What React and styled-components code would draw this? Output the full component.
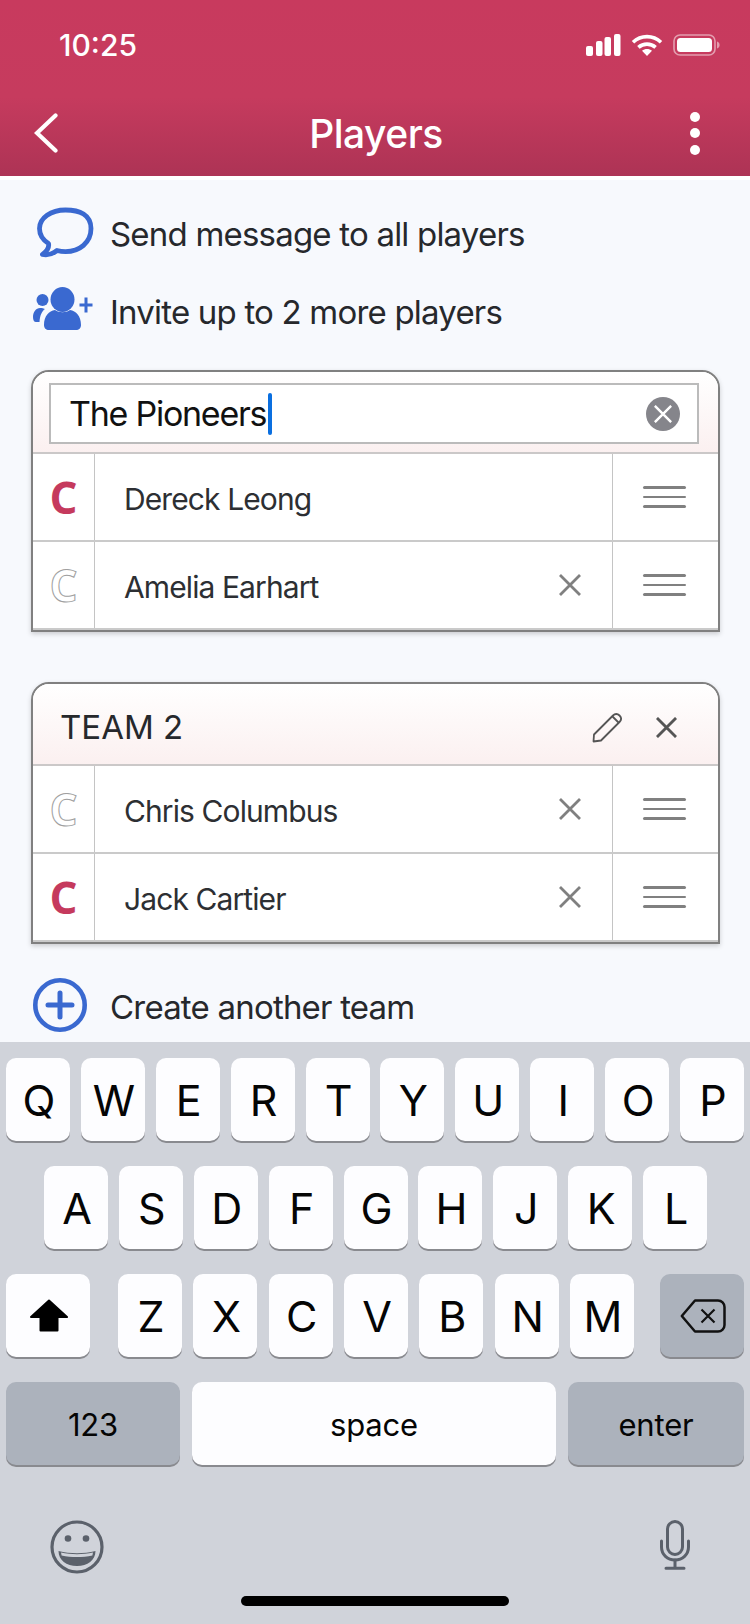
import React from 'react'
import styled, { createGlobalStyle } from 'styled-components'

const GlobalStyle = createGlobalStyle`
  html, body { margin: 0; padding: 0; }
  body { font-family: Inter, "Liberation Sans", sans-serif; background: #f7f9fd; }
`

const Screen = styled.div`
  width: 750px;
  height: 1624px;
  display: flex;
  flex-direction: column;
  overflow: hidden;
  background: #f7f9fd;
`

const Header = styled.header`
  box-sizing: border-box;
  height: 180px;
  flex: none;
  border-bottom: 4px solid #fff;
  background: linear-gradient(180deg, #c83a5e 0%, #c63b5e 55%, #ad3355 100%);
  color: #fff;
`

const StatusBar = styled.div`
  height: 90px;
  display: flex;
  align-items: center;
  justify-content: space-between;
  padding: 0 30px 0 59px;
`

const Clock = styled.span`
  font-size: 30px;
  font-weight: 500;
`

const StatusIcons = styled.div`
  display: flex;
  align-items: center;
  gap: 10px;
`

const NavBar = styled.nav`
  height: 86px;
  display: grid;
  grid-template-columns: 1fr auto 1fr;
  align-items: center;
  padding: 0 32px 0 34px;
`

const Title = styled.h1`
  margin: 0;
  font-size: 39px;
  font-weight: 500;
  letter-spacing: -0.5px;
`

const MoreDots = styled.div`
  justify-self: end;
  margin-right: 18px;
  display: flex;
  flex-direction: column;
  gap: 6.5px;

  span {
    width: 10px;
    height: 10px;
    border-radius: 50%;
    background: #fff;
  }
`

const Body = styled.main`
  flex: 1;
  min-height: 0;
  padding-top: 15px;
`

const ActionRow = styled.div`
  box-sizing: border-box;
  height: ${(p) => p.$height || 78}px;
  margin-top: ${(p) => p.$top || 0}px;
  display: flex;
  align-items: center;
  padding-left: 33px;
  font-size: 33px;
  letter-spacing: -0.8px;
  color: #26282c;
`

const IconSlot = styled.div`
  width: 77px;
  flex: none;
  display: flex;
  align-items: center;
`

const ActionLabel = styled.span`
  padding-top: ${(p) => p.$shift || 0}px;
`

const Card = styled.section`
  margin: ${(p) => p.$top}px 30px 0 31px;
  border: 2px solid #808080;
  border-radius: 18px 18px 0 0;
  background: #fff;
  box-shadow: 0 2px 5px rgba(0, 0, 0, 0.18);
  overflow: hidden;
`

const CardHeader = styled.div`
  box-sizing: border-box;
  height: 82px;
  display: flex;
  align-items: center;
  border-bottom: 2px solid #cbc8c8;
  background: linear-gradient(180deg, #ffffff 0%, #fbf0f0 100%);
  padding: ${(p) => (p.$editing ? '0 19px 0 16px' : '6px 41px 0 27px')};
`

const TeamField = styled.div`
  flex: 1;
  box-sizing: border-box;
  height: 61px;
  margin-top: 3px;
  display: flex;
  align-items: center;
  border: 2px solid #bbb;
  background: #fff;
  padding: 0 17px 0 18px;
  font-size: 34px;
  letter-spacing: -1.25px;
  color: #111;
`

const Caret = styled.span`
  width: 4px;
  height: 42px;
  margin-left: 2px;
  border-radius: 2px;
  background: #0a6fe0;
`

const ClearButton = styled.div`
  margin-left: auto;
  width: 34px;
  height: 34px;
  border-radius: 50%;
  background: #85858b;
  display: flex;
  align-items: center;
  justify-content: center;
`

const TeamName = styled.span`
  font-size: 33px;
  color: #26282c;
`

const HeaderActions = styled.div`
  margin-left: auto;
  display: flex;
  align-items: center;
  gap: 33px;
`

const PlayerRow = styled.div`
  box-sizing: border-box;
  height: 88px;
  display: grid;
  grid-template-columns: 62px 1fr 106px;
  border-bottom: 2px solid #cacaca;
`

const CaptainCell = styled.div`
  display: flex;
  align-items: center;
  justify-content: center;
  padding-bottom: 1px;
  border-right: 1px solid #c4c4c4;
`

const CaptainMark = styled.span`
  font-family: "Open Sans", sans-serif;
  font-size: 44px;
  font-weight: 700;
  line-height: 1;
  color: ${(p) => (p.$active ? '#c53a5d' : 'transparent')};
  -webkit-text-stroke: ${(p) => (p.$active ? '0' : '1px #a0a0a0')};
`

const NameCell = styled.div`
  display: flex;
  align-items: center;
  justify-content: space-between;
  padding: 4px 31px 0 29px;
  font-size: 30px;
  letter-spacing: -0.9px;
  color: #2d2f33;

  svg {
    margin-top: -4px;
  }
`

const HandleCell = styled.div`
  display: flex;
  flex-direction: column;
  align-items: center;
  justify-content: center;
  gap: 7px;
  border-left: 1px solid #c4c4c4;
  padding-right: 2px;

  span {
    width: 43px;
    height: 2.6px;
    border-radius: 2px;
    background: #808080;
  }
`

const Keyboard = styled.div`
  box-sizing: border-box;
  height: 582px;
  flex: none;
  background: #d0d3da;
  padding-top: 16px;
  display: flex;
  flex-direction: column;
  gap: 25px;
`

const KeyRow = styled.div`
  display: flex;
  justify-content: ${(p) => p.$justify || 'flex-start'};
  gap: ${(p) => p.$gap || 10.9}px;
  padding: 0 6px 0 ${(p) => p.$left || 6}px;
`

const LetterGroup = styled.div`
  display: flex;
  gap: 11.33px;
  margin-left: 2px;
`

const Key = styled.div`
  box-sizing: border-box;
  width: ${(p) => p.$width || 64}px;
  height: 83px;
  flex: none;
  display: flex;
  align-items: center;
  justify-content: center;
  padding-left: ${(p) => (p.$small ? 0 : 2)}px;
  padding-top: ${(p) => (p.$small ? 2 : 0)}px;
  border-radius: 10px;
  background: ${(p) => (p.$special ? '#acb2bc' : '#fdfdff')};
  box-shadow: 0 2px 0 #898a8f;
  font-size: ${(p) => (p.$small ? 31 : 43)}px;
  letter-spacing: ${(p) => (p.$small ? '-0.2px' : '0')};
  color: #050505;
`

const KeyboardFooter = styled.div`
  display: flex;
  align-items: flex-start;
  justify-content: space-between;
  padding: 30px 60px 0 50px;
  height: 54px;
`

const HomeBar = styled.div`
  width: 268px;
  height: 10px;
  margin: -3px auto 0;
  border-radius: 5px;
  background: #000;
`

const SignalIcon = () => (
  <svg width="35" height="22" viewBox="0 0 35 22" fill="#fff">
    <rect x="0" y="12" width="7" height="10" rx="2" />
    <rect x="10" y="7" width="6.5" height="15" rx="2" />
    <rect x="18.5" y="3" width="6.5" height="19" rx="2" />
    <rect x="28" y="0" width="6.5" height="22" rx="2" />
  </svg>
)

const WifiIcon = () => (
  <svg width="32" height="23" viewBox="0 0 32 23" fill="none" stroke="#fff" strokeWidth="3.6">
    <path d="M2 8.2C10 .8 22 .8 30 8.2" />
    <path d="M7.4 13.4c4.9-4.4 12.3-4.4 17.2 0" />
    <path d="M16 22l-5-5.2c2.9-2.4 7.1-2.4 10 0z" fill="#fff" stroke="none" />
  </svg>
)

const BatteryIcon = () => (
  <svg width="47" height="22" viewBox="0 0 47 22">
    <rect x="1" y="1" width="41" height="20" rx="6" fill="none" stroke="#fff" strokeOpacity="0.5" strokeWidth="1.6" />
    <rect x="4" y="4" width="35" height="14" rx="3.5" fill="#fff" />
    <path d="M44 7.5c1.6.5 2.6 1.8 2.6 3.5s-1 3-2.6 3.5z" fill="#fff" fillOpacity="0.5" />
  </svg>
)

const BackIcon = () => (
  <svg width="24" height="40" viewBox="0 0 24 40" fill="none" stroke="#fff" strokeWidth="4.2" strokeLinecap="round">
    <path d="M21.5 2.5L3 20l18.5 17.5" />
  </svg>
)

const BubbleIcon = () => (
  <svg width="62" height="54" viewBox="0 0 62 54" fill="none" stroke="#3a69d0" strokeWidth="4.8" strokeLinejoin="round">
    <path d="M32.500 3C18 3 6.500 11 6.500 21.500c0 6 3.500 11.500 9 15 .8 3.500-2 8-6 11 4 1 10-.5 14.500-4 2.700.7 5.500 1.100 8.500 1.100 14 0 25.500-9 25.500-23S46.500 3 32.500 3z" />
  </svg>
)

const UsersPlusIcon = () => (
  <svg width="62" height="54" viewBox="0 0 62 54" fill="#3a69d0">
    <ellipse cx="29.5" cy="14.5" rx="12" ry="12.5" />
    <path d="M11 40c0-9 5-14 11-15 4 3 11 3 15 0 6 1 11 6 11 15 0 3-2 5-5 5H16c-3 0-5-2-5-5z" />
    <ellipse cx="9.5" cy="15" rx="6" ry="6" />
    <path d="M0 32c0-5 3-9 7-9 2 0 4 .5 5 1-3 2-5 6-5.500 13H3c-2 0-3-2-3-5z" />
    <path d="M46.500 20h13M53 12.500v15" stroke="#3a69d0" strokeWidth="3" fill="none" />
  </svg>
)

const PlusCircleIcon = () => (
  <svg width="54" height="54" viewBox="0 0 54 54" fill="none" stroke="#3a69d0">
    <circle cx="27" cy="27" r="24.700" strokeWidth="4.600" />
    <path d="M15 27h24M27 15v24" strokeWidth="5" strokeLinecap="round" />
  </svg>
)

const CrossIcon = ({ size = 22, color = '#808080', weight = 2.8 }) => (
  <svg width={size} height={size} viewBox="0 0 22 22" fill="none" stroke={color} strokeWidth={weight}>
    <path d="M1 1l20 20M21 1L1 21" />
  </svg>
)

const PencilIcon = () => (
  <svg width="31" height="31" viewBox="0 0 31 31" fill="none" stroke="#555" strokeWidth="1.8" strokeLinejoin="round">
    <path d="M1.500 29.500L2 22.500 21 3.500c2-2 4.500-2 6.500 0s2 4.500 0 6.500L9 28.500z" />
    <path d="M20.500 4.500l6.500 6.500" />
  </svg>
)

const ShiftIcon = () => (
  <svg width="38" height="33" viewBox="0 0 38 33" fill="#000" stroke="#000" strokeWidth="2" strokeLinejoin="round">
    <path d="M19 1.500L37 18H27.500v13.500h-17V18H1z" />
  </svg>
)

const BackspaceIcon = () => (
  <svg width="46" height="34" viewBox="0 0 46 34" fill="none" stroke="#111" strokeWidth="2.500" strokeLinejoin="round">
    <path d="M15 1.500h23a6.500 6.500 0 0 1 6.500 6.500v18a6.500 6.500 0 0 1-6.500 6.500H15L1.800 17z" />
    <path d="M21.500 10.500l13 13M34.500 10.500l-13 13" strokeWidth="2.200" />
  </svg>
)

const EmojiIcon = () => (
  <svg width="54" height="54" viewBox="0 0 54 54" fill="none">
    <circle cx="27" cy="27" r="25" stroke="#5b616b" strokeWidth="3.200" />
    <circle cx="18" cy="18.500" r="3.300" fill="#5b616b" />
    <circle cx="36" cy="18.500" r="3.300" fill="#5b616b" />
    <path d="M8.500 31c12 3 25 3 37 0 0 9-8 15-18.500 15S8.500 40 8.500 31z" fill="#5b616b" />
    <path d="M11 32.500c10 2.300 22 2.300 32 0l-.6 3c-10 2-21 2-30.800 0z" fill="#d0d3da" />
  </svg>
)

const MicIcon = () => (
  <svg width="30" height="50" viewBox="0 0 30 50" fill="none" stroke="#5b616b" strokeWidth="3" strokeLinecap="round">
    <rect x="7.500" y="1.500" width="15" height="33" rx="7.500" />
    <path d="M1.500 21v6c0 7.500 6 13 13.500 13s13.500-5.500 13.500-13v-6" />
    <path d="M15 40v8M6 48.300h18" />
  </svg>
)

const ROW_ONE = ['Q', 'W', 'E', 'R', 'T', 'Y', 'U', 'I', 'O', 'P']
const ROW_TWO = ['A', 'S', 'D', 'F', 'G', 'H', 'J', 'K', 'L']
const ROW_THREE = ['Z', 'X', 'C', 'V', 'B', 'N', 'M']

const Player = ({ name, captain, removable = true }) => (
  <PlayerRow>
    <CaptainCell>
      <CaptainMark $active={captain}>C</CaptainMark>
    </CaptainCell>
    <NameCell>
      {name}
      {removable && <CrossIcon />}
    </NameCell>
    <HandleCell>
      <span />
      <span />
      <span />
    </HandleCell>
  </PlayerRow>
)

export default function App() {
  return (
    <Screen>
      <GlobalStyle />
      <Header>
        <StatusBar>
          <Clock>10:25</Clock>
          <StatusIcons>
            <SignalIcon />
            <WifiIcon />
            <BatteryIcon />
          </StatusIcons>
        </StatusBar>
        <NavBar>
          <BackIcon />
          <Title>Players</Title>
          <MoreDots>
            <span />
            <span />
            <span />
          </MoreDots>
        </NavBar>
      </Header>

      <Body>
        <ActionRow>
          <IconSlot><BubbleIcon /></IconSlot>
          <ActionLabel>Send message to all players</ActionLabel>
        </ActionRow>
        <ActionRow>
          <IconSlot><UsersPlusIcon /></IconSlot>
          <ActionLabel>Invite up to 2 more players</ActionLabel>
        </ActionRow>

        <Card $top={19}>
          <CardHeader $editing>
            <TeamField>
              The Pioneers
              <Caret />
              <ClearButton>
                <CrossIcon size={18} color="#fff" weight={3} />
              </ClearButton>
            </TeamField>
          </CardHeader>
          <Player name="Dereck Leong" captain removable={false} />
          <Player name="Amelia Earhart" />
        </Card>

        <Card $top={50}>
          <CardHeader>
            <TeamName>TEAM 2</TeamName>
            <HeaderActions>
              <PencilIcon />
              <CrossIcon size={21} color="#555" weight={3} />
            </HeaderActions>
          </CardHeader>
          <Player name="Chris Columbus" />
          <Player name="Jack Cartier" captain />
        </Card>

        <ActionRow $top={24} $height={74}>
          <IconSlot><PlusCircleIcon /></IconSlot>
          <ActionLabel $shift={4}>Create another team</ActionLabel>
        </ActionRow>
      </Body>

      <Keyboard>
        <KeyRow>
          {ROW_ONE.map((k) => <Key key={k}>{k}</Key>)}
        </KeyRow>
        <KeyRow $left={44}>
          {ROW_TWO.map((k) => <Key key={k}>{k}</Key>)}
        </KeyRow>
        <KeyRow $justify="space-between" $gap={0}>
          <Key $width={84}><ShiftIcon /></Key>
          <LetterGroup>
            {ROW_THREE.map((k) => <Key key={k}>{k}</Key>)}
          </LetterGroup>
          <Key $width={84} $special><BackspaceIcon /></Key>
        </KeyRow>
        <KeyRow $gap={12}>
          <Key $width={174} $special $small>123</Key>
          <Key $width={364} $small>space</Key>
          <Key $width={176} $special $small>enter</Key>
        </KeyRow>
        <KeyboardFooter>
          <EmojiIcon />
          <MicIcon />
        </KeyboardFooter>
        <HomeBar />
      </Keyboard>
    </Screen>
  )
}
